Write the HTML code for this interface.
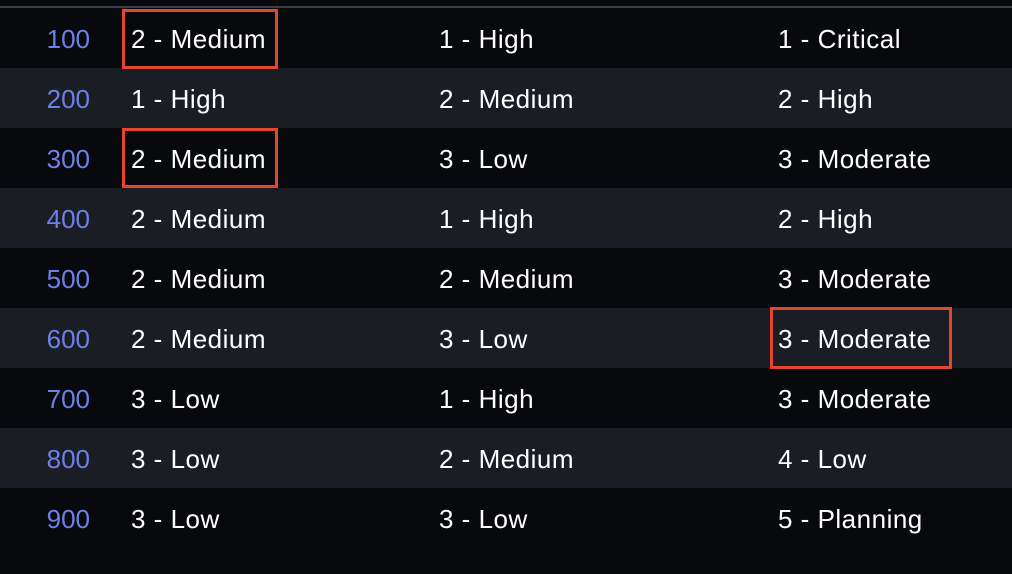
<!DOCTYPE html>
<html><head><style>
body{margin:0;width:1012px;height:574px;background:#08090c;overflow:hidden;font-family:"Liberation Sans",sans-serif;position:relative}
.hl{position:absolute;left:0;top:6px;width:1012px;height:2px;background:#3a3d45}
.r{position:absolute;left:0;width:1012px;height:60px}
.e{background:#1a1d24}
.c{position:absolute;top:1px;line-height:60px;font-size:26px;letter-spacing:0.5px;color:#fff;white-space:nowrap}
.n{right:922px;color:#6d80e8;letter-spacing:0}
.a{left:131px}.b{left:439px}.d{left:778px}
.box{position:absolute;border:3px solid #e5452d;box-sizing:border-box}
</style></head><body>
<div class="hl"></div>
<div class="r" style="top:8px"><span class="c n">100</span><span class="c a">2 - Medium</span><span class="c b">1 - High</span><span class="c d">1 - Critical</span></div>
<div class="r e" style="top:68px"><span class="c n">200</span><span class="c a">1 - High</span><span class="c b">2 - Medium</span><span class="c d">2 - High</span></div>
<div class="r" style="top:128px"><span class="c n">300</span><span class="c a">2 - Medium</span><span class="c b">3 - Low</span><span class="c d">3 - Moderate</span></div>
<div class="r e" style="top:188px"><span class="c n">400</span><span class="c a">2 - Medium</span><span class="c b">1 - High</span><span class="c d">2 - High</span></div>
<div class="r" style="top:248px"><span class="c n">500</span><span class="c a">2 - Medium</span><span class="c b">2 - Medium</span><span class="c d">3 - Moderate</span></div>
<div class="r e" style="top:308px"><span class="c n">600</span><span class="c a">2 - Medium</span><span class="c b">3 - Low</span><span class="c d">3 - Moderate</span></div>
<div class="r" style="top:368px"><span class="c n">700</span><span class="c a">3 - Low</span><span class="c b">1 - High</span><span class="c d">3 - Moderate</span></div>
<div class="r e" style="top:428px"><span class="c n">800</span><span class="c a">3 - Low</span><span class="c b">2 - Medium</span><span class="c d">4 - Low</span></div>
<div class="r" style="top:488px"><span class="c n">900</span><span class="c a">3 - Low</span><span class="c b">3 - Low</span><span class="c d">5 - Planning</span></div>
<div class="box" style="left:122px;top:9px;width:156px;height:60px"></div>
<div class="box" style="left:122px;top:128px;width:156px;height:60px"></div>
<div class="box" style="left:770px;top:307px;width:182px;height:62px"></div>
</body></html>
